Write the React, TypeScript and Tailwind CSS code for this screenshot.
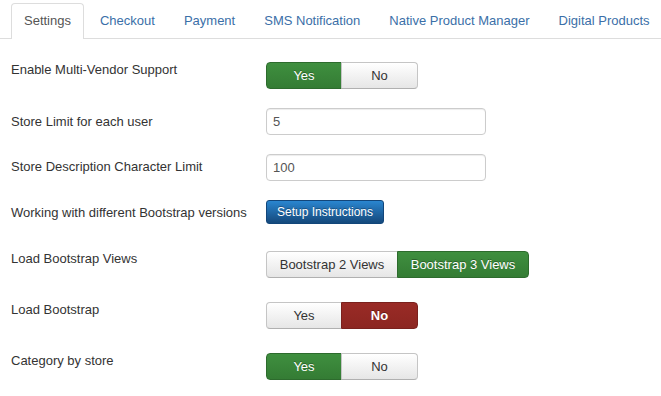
import { useState } from "react";

const tabs = ["Settings", "Checkout", "Payment", "SMS Notification", "Native Product Manager", "Digital Products"];

type ToggleProps = {
  options: string[];
  value: number;
  widths: string[];
  activeClass: string[];
};

const grayBtn =
  "bg-gradient-to-b from-white to-[#e6e6e6] text-[#333] border-[#c5c5c5] border-b-[#b0b0b0]";

function Toggle({ options, value, widths, activeClass }: ToggleProps) {
  return (
    <div className="flex mt-px">
      {options.map((opt, i) => (
        <button
          key={opt}
          className={[
            "h-[27px] border text-[13px] leading-[18px] flex items-center justify-center",
            widths[i],
            i === 0 ? "rounded-l-[4px]" : "rounded-r-[4px] -ml-px",
            i === value ? activeClass[i] : grayBtn,
          ].join(" ")}
        >
          {opt}
        </button>
      ))}
    </div>
  );
}

const green =
  "bg-gradient-to-b from-[#3f8f3f] to-[#347c34] border-[#2d6b2d] text-white [text-shadow:0_-1px_0_rgba(0,0,0,0.3)]";
const red =
  "bg-gradient-to-b from-[#9a2b26] to-[#8c2621] border-[#7a211d] text-white [text-shadow:0_-1px_0_rgba(0,0,0,0.35)] font-bold";

function Row({ label, labelPad, className, children }: { label: string; labelPad: string; className: string; children: React.ReactNode }) {
  return (
    <div className={"flex items-start " + className}>
      <div className={"w-[255px] text-[13px] leading-[18px] text-[#333] " + labelPad}>{label}</div>
      {children}
    </div>
  );
}

export default function App() {
  const [active] = useState(0);
  return (
    <div className="w-[661px] h-[396px] bg-white overflow-hidden font-['Liberation_Sans',Arial,sans-serif]">
      <div className="flex border-b border-[#ddd] pl-[11px] pt-[3px] h-[39px]">
        {tabs.map((t, i) => (
          <div
            key={t}
            className={[
              "px-3 h-[36px] mr-[3px] border border-b-0 rounded-t-[4px] text-[13px] leading-[34px] whitespace-nowrap",
              i === active ? "border-[#ddd] text-[#555] bg-white" : "border-transparent text-[#3b6fa8]",
            ].join(" ")}
          >
            {t}
          </div>
        ))}
      </div>

      <div className="pl-[11px]">
        <Row label="Enable Multi-Vendor Support" labelPad="pt-0" className="mt-[22px]">
          <Toggle options={["Yes", "No"]} value={0} widths={["w-[76px]", "w-[77px]"]} activeClass={[green, red]} />
        </Row>

        <Row label="Store Limit for each user" labelPad="pt-[5px]" className="mt-[19px]">
          <input
            readOnly
            value="5"
            className="w-[220px] h-[27px] border border-[#ccc] rounded-[4px] px-[6px] text-[13px] text-[#555] shadow-[inset_0_1px_1px_rgba(0,0,0,0.075)] outline-none"
          />
        </Row>

        <Row label="Store Description Character Limit" labelPad="pt-[4px]" className="mt-[19px]">
          <input
            readOnly
            value="100"
            className="w-[220px] h-[27px] border border-[#ccc] rounded-[4px] px-[6px] text-[13px] text-[#555] shadow-[inset_0_1px_1px_rgba(0,0,0,0.075)] outline-none"
          />
        </Row>

        <Row label="Working with different Bootstrap versions" labelPad="pt-[4px]" className="mt-[19px]">
          <button className="h-[24px] w-[118px] rounded-[3px] border border-[#12467a] bg-gradient-to-b from-[#2a86d0] to-[#15497c] text-white text-[12px] [text-shadow:0_-1px_0_rgba(0,0,0,0.3)]">
            Setup Instructions
          </button>
        </Row>

        <Row label="Load Bootstrap Views" labelPad="pt-0" className="mt-[26px]">
          <Toggle
            options={["Bootstrap 2 Views", "Bootstrap 3 Views"]}
            value={1}
            widths={["w-[132px]", "w-[132px]"]}
            activeClass={[green, green]}
          />
        </Row>

        <Row label="Load Bootstrap" labelPad="pt-0" className="mt-[23px]">
          <Toggle options={["Yes", "No"]} value={1} widths={["w-[76px]", "w-[77px]"]} activeClass={[green, red]} />
        </Row>

        <Row label="Category by store" labelPad="pt-0" className="mt-[23px]">
          <Toggle options={["Yes", "No"]} value={0} widths={["w-[76px]", "w-[77px]"]} activeClass={[green, red]} />
        </Row>
      </div>
    </div>
  );
}
